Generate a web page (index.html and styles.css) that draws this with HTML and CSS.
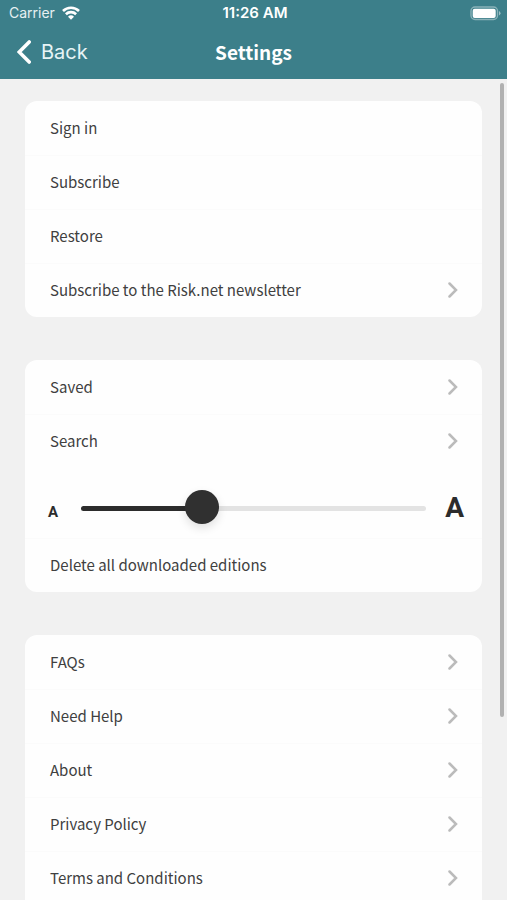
FILE: index.html
```html
<!DOCTYPE html>
<html lang="en">
<head>
<meta charset="utf-8">
<meta name="viewport" content="width=device-width, initial-scale=1">
<title>Settings</title>
<link rel="stylesheet" href="styles.css">
</head>
<body>
<svg class="symbols" aria-hidden="true">
  <symbol id="chevron" viewBox="0 0 10 16"><path d="M1.500 1.500 8 8l-6.500 6.500" fill="none" stroke="currentColor" stroke-width="2.500" stroke-linecap="round" stroke-linejoin="miter"/></symbol>
</svg>
<header class="header">
  <div class="status">
    <div class="carrier">
      <span>Carrier</span>
      <svg class="wifi" viewBox="0 0 18 14" aria-hidden="true">
        <path d="M1 5a11.400 11.400 0 0 1 16 0M3.900 8.200a7.300 7.300 0 0 1 10.200 0" fill="none" stroke="currentColor" stroke-width="2.600"/>
        <path d="M9 13.800 6 10.700a4.300 4.300 0 0 1 6 0z" fill="currentColor"/>
      </svg>
    </div>
    <time class="clock">11:26 AM</time>
    <svg class="battery" viewBox="0 0 31 15" aria-hidden="true">
      <rect x="1" y="1" width="26.500" height="12.500" rx="4" fill="none" stroke="#fff" stroke-opacity=".4" stroke-width="1.400"/>
      <rect x="2.700" y="2.700" width="23" height="9.200" rx="2" fill="#fff"/>
      <path d="M29 5v4.500q1.500-.7 1.500-2.250T29 5z" fill="#fff" fill-opacity=".5"/>
    </svg>
  </div>
  <nav class="navbar">
    <a class="back" href="#">
      <svg class="back-icon" viewBox="0 0 14 24" aria-hidden="true"><path d="M12.200 2 2.200 12l10 10" fill="none" stroke="currentColor" stroke-width="3.600" stroke-linecap="round" stroke-linejoin="miter"/></svg>
      Back
    </a>
    <h1 class="title">Settings</h1>
  </nav>
</header>
<main class="content">
  <section class="card">
    <button class="row" type="button">Sign in</button>
    <button class="row" type="button">Subscribe</button>
    <button class="row" type="button">Restore</button>
    <a class="row" href="#">Subscribe to the Risk.net newsletter<svg class="chevron" aria-hidden="true"><use href="#chevron"/></svg></a>
  </section>
  <section class="card">
    <a class="row" href="#">Saved<svg class="chevron" aria-hidden="true"><use href="#chevron"/></svg></a>
    <a class="row" href="#">Search<svg class="chevron" aria-hidden="true"><use href="#chevron"/></svg></a>
    <div class="text-size">
      <label class="letter letter-small" for="text-size">A</label>
      <input class="slider" id="text-size" type="range" min="0" max="3" value="1">
      <label class="letter letter-large" for="text-size">A</label>
    </div>
    <button class="row" type="button">Delete all downloaded editions</button>
  </section>
  <section class="card card-last">
    <a class="row" href="#">FAQs<svg class="chevron" aria-hidden="true"><use href="#chevron"/></svg></a>
    <a class="row" href="#">Need Help<svg class="chevron" aria-hidden="true"><use href="#chevron"/></svg></a>
    <a class="row" href="#">About<svg class="chevron" aria-hidden="true"><use href="#chevron"/></svg></a>
    <a class="row" href="#">Privacy Policy<svg class="chevron" aria-hidden="true"><use href="#chevron"/></svg></a>
    <a class="row" href="#">Terms and Conditions<svg class="chevron" aria-hidden="true"><use href="#chevron"/></svg></a>
  </section>
</main>
<div class="scroll-thumb"></div>
</body>
</html>
```
FILE: styles.css
```css
* {
  box-sizing: border-box;
}

body {
  margin: 0;
  height: 100vh;
  display: flex;
  flex-direction: column;
  position: relative;
  overflow: hidden;
  background: #f1f1f1;
  color: #404040;
  font-family: "Noto Sans CJK SC", "Open Sans", sans-serif;
  font-size: 15px;
}

.symbols {
  display: none;
}

.header {
  flex: none;
  background: #3c7f8a;
  color: #fff;
  padding-bottom: 1px;
}

.status {
  display: grid;
  grid-template-columns: 1fr auto 1fr;
  align-items: center;
  height: 26px;
  padding: 0 6px 0 9px;
  font-family: Inter, sans-serif;
  font-size: 14px;
  line-height: 26px;
}

.carrier {
  display: flex;
  align-items: center;
  gap: 7px;
  color: #e6f0f2;
}

.wifi {
  width: 18px;
  height: 14px;
  color: #fff;
}

.clock {
  font-size: 15px;
  font-weight: 600;
}

.battery {
  width: 31px;
  height: 15px;
  justify-self: end;
}

.navbar {
  display: grid;
  grid-template-columns: 1fr auto 1fr;
  align-items: center;
  height: 52px;
  padding: 0 17px;
}

.back {
  display: flex;
  align-items: center;
  gap: 10px;
  color: #e6f4f6;
  font-family: Inter, sans-serif;
  font-size: 20px;
  line-height: 28px;
  text-decoration: none;
}

.back-icon {
  width: 14px;
  height: 24px;
  color: #fff;
}

.title {
  margin: 0;
  font-size: 19px;
  line-height: 28px;
  font-weight: 700;
}

.content {
  flex: 1;
  min-height: 0;
  display: flex;
  flex-direction: column;
  gap: 43px;
  padding: 22px 25px 0;
  overflow-y: auto;
  scrollbar-width: none;
}

.card {
  flex: none;
  background: #fefefe;
  border-radius: 12px;
}

.card-last {
  border-radius: 12px 12px 0 0;
}

.row {
  display: flex;
  align-items: center;
  justify-content: space-between;
  width: 100%;
  height: 54px;
  padding: 0 24px 0 25px;
  border: 0;
  background: none;
  color: inherit;
  font: inherit;
  line-height: 24px;
  text-align: left;
  text-decoration: none;
}

.row + .row,
.text-size + .row {
  box-shadow: inset 0 1px #fbfbfb;
}

.chevron {
  width: 10px;
  height: 16px;
  color: #bbb;
}

.text-size {
  display: flex;
  align-items: baseline;
  height: 70px;
  padding: 10px 18px 0 23px;
}

.letter {
  color: #2c2c2c;
  font-family: Roboto, "Liberation Sans", sans-serif;
  font-weight: 700;
  line-height: 60px;
}

.letter-small {
  width: 33px;
  font-size: 15px;
}

.letter-large {
  width: 38px;
  text-align: right;
  font-size: 28px;
}

.slider {
  flex: 1;
  align-self: center;
  min-width: 0;
  height: 34px;
  margin: 0;
  appearance: none;
  background: none;
}

.slider::-webkit-slider-runnable-track {
  height: 5px;
  border-radius: 3px;
  background: linear-gradient(to right, #2c2c2c 35%, #e3e3e3 35%);
}

.slider::-webkit-slider-thumb {
  appearance: none;
  width: 34px;
  height: 34px;
  margin-top: -16px;
  border-radius: 50%;
  background: #303030;
  box-shadow: 0 4px 10px rgba(0, 0, 0, 0.12);
}

.scroll-thumb {
  position: absolute;
  top: 83px;
  right: 3px;
  width: 4px;
  height: 634px;
  border-radius: 2px;
  background: #b1b1b1;
}
```
